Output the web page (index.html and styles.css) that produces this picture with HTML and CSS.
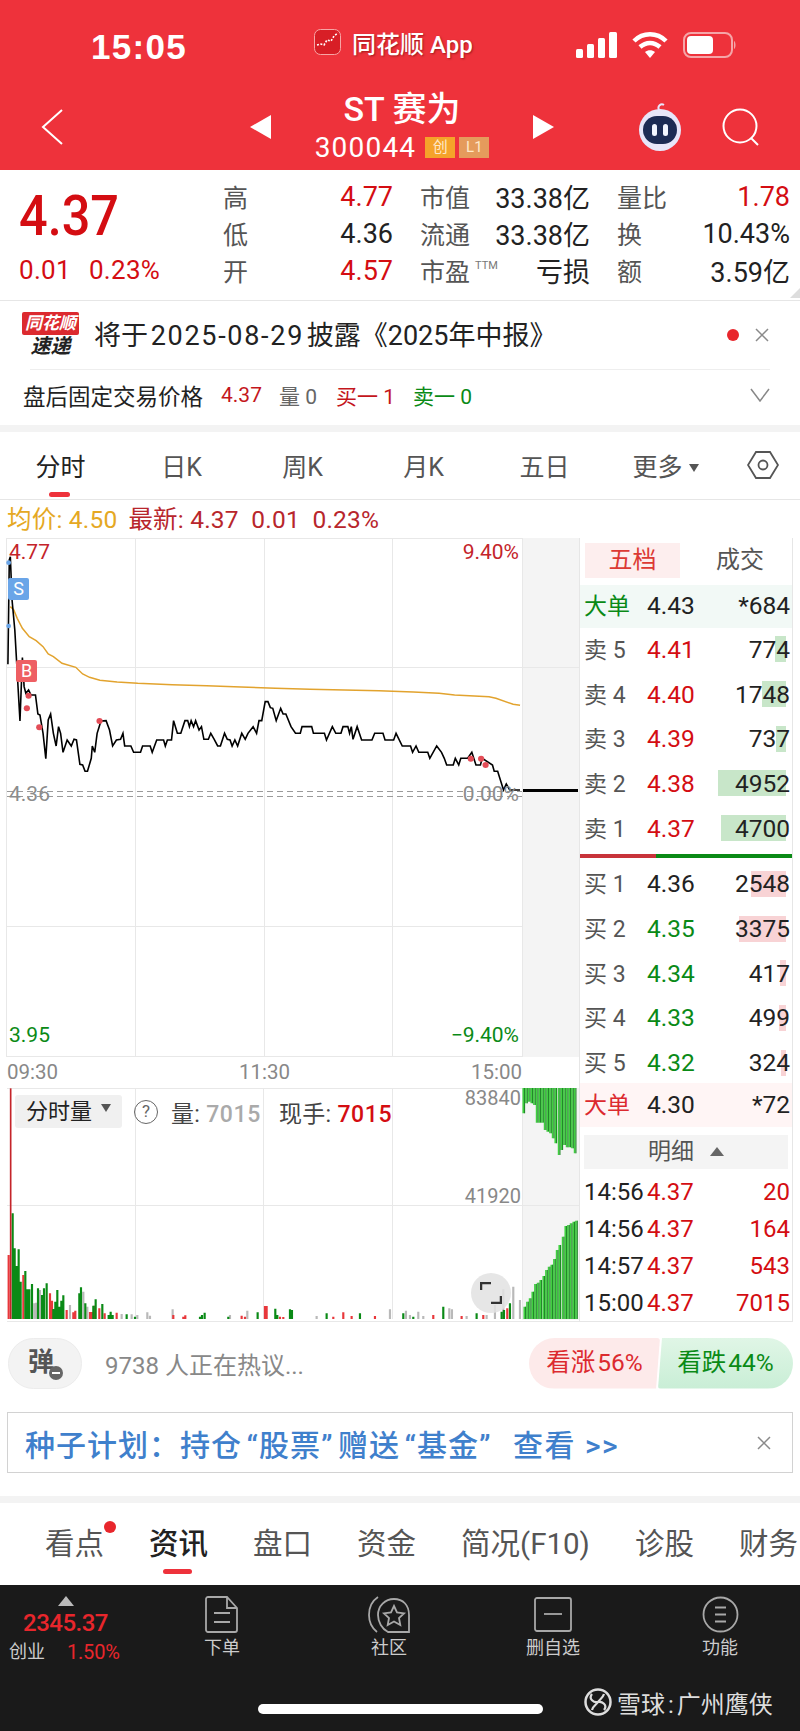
FILE: index.html
```html
<!doctype html>
<html>
  <head>
    <meta charset="utf-8" />
    <title>ST赛为 300044</title>
    <meta name="viewport" content="width=device-width" />
    <link rel="stylesheet" href="styles.css">
  </head>

  <body>
    <header class="topbar">
      <div class="status">
        <span class="time">15:05</span>
        <svg class="app-icon" width="27" height="26" viewBox="0 0 27 26">
          <rect x="0.5" y="0.5" width="26" height="25" rx="6" fill="#d81e26" stroke="#f7a5a5" />
          <path d="M3 16l4-1 3 1 3-5 4 1 3-5 4-3" fill="none" stroke="#fff" stroke-width="1.6" stroke-dasharray="2 1.5" />
        </svg>
        <span class="app-name">同花顺 App</span>
        <svg class="signal" width="41" height="26" viewBox="0 0 41 26">
          <rect x="0" y="17" width="7" height="9" rx="1.5" fill="#fff" />
          <rect x="11" y="12" width="7" height="14" rx="1.5" fill="#fff" />
          <rect x="22" y="6" width="7" height="20" rx="1.5" fill="#fff" />
          <rect x="33" y="0" width="8" height="26" rx="1.5" fill="#fff" />
        </svg>
        <svg class="wifi" width="36" height="26" viewBox="0 0 36 26">
          <path d="M2 9c9-9 23-9 32 0" fill="none" stroke="#fff" stroke-width="4.5" />
          <path d="M8 15c6-5.500 14-5.500 20 0" fill="none" stroke="#fff" stroke-width="4.500" />
          <path d="M13 20c3-2.500 7-2.500 10 0l-5 6z" fill="#fff" />
        </svg>
        <svg class="battery" width="54" height="26" viewBox="0 0 54 26">
          <rect x="1" y="1" width="48" height="24" rx="7" fill="none" stroke="#f5a5a8" stroke-width="2" />
          <rect x="4" y="4" width="26" height="18" rx="4" fill="#fff" />
          <path d="M51 9c2 1 2 7 0 8z" fill="#f5a5a8" />
        </svg>
      </div>
      <div class="nav">
        <svg class="back" width="22" height="36" viewBox="0 0 22 36"><path d="M21 1L2 18l19 17" fill="none" stroke="#fff" stroke-width="2" /></svg>
        <svg class="arrow" width="21" height="24" viewBox="0 0 21 24"><path d="M21 0v24L0 12z" fill="#fff" /></svg>
        <div class="stock">
          <div class="stock-name">ST 赛为</div>
          <div class="stock-code">300044<span class="tag tag-cy">创</span><span class="tag tag-l1">L1</span></div>
        </div>
        <svg class="arrow" width="21" height="24" viewBox="0 0 21 24"><path d="M0 0v24l21-12z" fill="#fff" /></svg>
        <svg class="robot" width="46" height="48" viewBox="0 0 46 48">
          <path d="M22 7c-2-4 2-7 5-5" fill="none" stroke="#e9e6fb" stroke-width="2" />
          <circle cx="23" cy="27" r="21" fill="#e7e6fa" />
          <rect x="6" y="13" width="34" height="28" rx="14" fill="#1c2b55" />
          <rect x="15" y="21" width="5" height="12" rx="2.500" fill="#f2f5ff" />
          <rect x="26" y="21" width="5" height="12" rx="2.500" fill="#f2f5ff" />
        </svg>
        <svg class="search" width="38" height="38" viewBox="0 0 38 38">
          <circle cx="18" cy="18" r="16.500" fill="none" stroke="#fff" stroke-width="2" />
          <path d="M29 30l7 7" stroke="#fff" stroke-width="2" />
        </svg>
      </div>
    </header>

    <section class="quote">
      <div class="last">
        <div class="last-price">4.37</div>
        <div class="last-change"><span>0.01</span><span>0.23%</span></div>
      </div>
      <div class="stats">
        <div class="stat"><span class="k">高</span><span class="v up">4.77</span></div>
        <div class="stat"><span class="k">市值</span><span class="v">33.38亿</span></div>
        <div class="stat"><span class="k">量比</span><span class="v up">1.78</span></div>
        <div class="stat"><span class="k">低</span><span class="v">4.36</span></div>
        <div class="stat"><span class="k">流通</span><span class="v">33.38亿</span></div>
        <div class="stat"><span class="k">换</span><span class="v">10.43%</span></div>
        <div class="stat"><span class="k">开</span><span class="v up">4.57</span></div>
        <div class="stat"><span class="k">市盈<sup class="ttm">TTM</sup></span><span class="v">亏损</span></div>
        <div class="stat"><span class="k">额</span><span class="v">3.59亿</span></div>
      </div>
    </section>

    <section class="notice">
      <div class="notice-top">
        <div class="express">
          <div class="express-flag">同花顺</div>
          <div class="express-word">速递</div>
        </div>
        <div class="notice-text">将于 <span class="notice-date">2025-08-29</span> 披露《2025年中报》</div>
        <span class="notice-dot"></span>
        <svg class="close" width="14" height="14" viewBox="0 0 14 14"><path d="M1 1l12 12M13 1L1 13" stroke="#8a8a8a" stroke-width="1.500" /></svg>
      </div>
      <div class="notice-bottom">
        <span class="nb-title">盘后固定交易价格</span>
        <span class="nb-price">4.37</span>
        <span class="nb-vol">量 0</span>
        <span class="nb-buy">买一 1</span>
        <span class="nb-sell">卖一 0</span>
        <svg class="chevron" width="20" height="14" viewBox="0 0 20 14"><path d="M1 1l9 12 9-12" fill="none" stroke="#888" stroke-width="1.500" /></svg>
      </div>
    </section>

    <nav class="ktabs">
      <span class="ktab active">分时</span>
      <span class="ktab">日K</span>
      <span class="ktab">周K</span>
      <span class="ktab">月K</span>
      <span class="ktab">五日</span>
      <span class="ktab">更多<i class="caret"></i></span>
      <svg class="hex" width="32" height="28" viewBox="0 0 32 28">
        <path d="M9 1h14l8 13-8 13H9L1 14z" fill="none" stroke="#555" stroke-width="1.800" />
        <circle cx="16" cy="14" r="4.500" fill="none" stroke="#555" stroke-width="1.800" />
      </svg>
    </nav>

    <div class="pricebar">
      <span class="avg">均价: 4.50</span>
      <span class="latest">最新: 4.37&nbsp; 0.01&nbsp; 0.23%</span>
    </div>

    <main class="board">
      <div class="charts">
        <div class="price-chart">
          <svg width="579" height="519" viewBox="0 0 579 519">
            <rect x="522" y="0" width="57" height="519" fill="#f4f4f4" />
            <path class="grid" d="M7 .5H522M7 129.500H579M7 388.500H522M7 518.500H522M6.500 0V519M135.500 0V519M264.500 0V519M392.500 0V519M522.500 0V519" />
            <path class="dash" d="M7 253.500H522M7 258.500H522" />
            <path d="M523 252.500H578" stroke="#000" stroke-width="3" />
            <g transform="translate(0 -8) scale(.3444 .3333)">
              <polyline class="avg-line" points="30,230 40,240 50,265 65,295 85,320 105,332 125,350 140,372 155,380 180,400 220,412 240,432 260,442 290,451 340,456 400,460 500,464 600,467 700,471 800,475 900,478 1000,480 1100,482 1200,486 1275,490 1320,495 1420,500 1440,505 1490,523 1510,526" />
              <polyline class="price-line" points="23,403 27,90 30,80 35,210 43,300 58,573 65,383 70,470 75,490 83,480 90,495 103,495 110,552 116,555 125,610 133,686 140,570 147,552 155,610 163,648 170,590 176,610 183,667 195,630 207,648 215,628 222,630 232,703 240,705 247,724 254,724 265,685 268,648 275,667 282,610 288,590 293,573 308,572 318,600 327,648 338,630 350,628 357,610 362,648 380,648 388,667 408,667 414,648 436,648 442,667 455,630 475,630 480,648 486,630 498,630 504,572 515,610 525,610 537,572 545,572 550,590 555,572 562,590 568,572 578,600 585,590 592,628 605,628 612,610 622,628 632,648 640,648 652,610 660,628 668,630 674,648 682,630 690,648 702,610 712,628 720,610 735,590 745,610 752,572 760,572 770,515 778,515 785,533 792,535 802,572 815,535 822,552 830,552 845,590 858,610 872,610 877,590 905,590 910,610 942,610 948,630 965,590 975,610 990,610 996,590 1010,590 1015,610 1020,590 1025,628 1037,590 1050,630 1080,630 1088,610 1112,610 1118,630 1143,630 1150,610 1168,648 1192,648 1198,667 1208,648 1216,667 1242,667 1248,685 1268,648 1282,667 1290,685 1297,705 1316,705 1322,685 1332,705 1338,685 1358,685 1370,667 1382,705 1395,705 1400,685 1430,705 1435,724 1445,724 1462,780 1470,762 1480,780 1510,780" />
              <g class="dots-red">
                <circle cx="83" cy="497" r="9" /><circle cx="78" cy="535" r="9" /><circle cx="114" cy="592" r="9" />
                <circle cx="289" cy="573" r="9" /><circle cx="1367" cy="686" r="9" /><circle cx="1397" cy="686" r="9" /><circle cx="1410" cy="705" r="9" />
              </g>
              <g class="dots-blue"><circle cx="25" cy="98" r="7" /><circle cx="25" cy="288" r="7" /></g>
            </g>
          </svg>
          <span class="flag flag-s">S</span>
          <span class="flag flag-b">B</span>
          <span class="axis axis-high">4.77</span>
          <span class="axis axis-high-pct">9.40%</span>
          <span class="axis axis-mid">4.36</span>
          <span class="axis axis-mid-pct">0.00%</span>
          <span class="axis axis-low">3.95</span>
          <span class="axis axis-low-pct">−9.40%</span>
        </div>

        <div class="timeline"><span>09:30</span><span>11:30</span><span>15:00</span></div>

        <div class="volume-chart">
          <svg width="579" height="234" viewBox="0 0 579 234">
            <rect x="522" y="0" width="57" height="232" fill="#f4f4f4" />
            <path class="grid" d="M7 .5H522M7 117.500H579M7 233.500H579M135.500 0V231M263.500 0V231M392.500 0V231M522.500 0V231" />
            <g transform="translate(0 -28) scale(.3333)">
              <path class="bars-gray" d="M103 777V730M108 777V728M120 777V690M210 777V735M250 777V695M262 777V740M365 777V762M395 777V763M412 777V765M442 777V757M450 777V767M518 777V748M690 777V765M742 777V752M950 777V768M1170 777V748M1218 777V752M1230 777V765M1255 777V755M1270 777V768M1348 777V745M1356 777V748M1400 777V768M1460 777V765M1485 777V735M1510 777V688M1540 777V680M1560 777V720" />
              <path class="bars-red" d="M26 777V585M70 777V645M150 777V700M156 777V722M200 777V750M220 777V757M226 777V752M270 777V756M276 777V756M283 777V737M298 777V745M314 777V760M350 777V758M520 777V765M550 777V770M556 777V766M725 777V767M735 777V770M795 777V738M800 777V738M840 777V770M850 777V771M1000 777V770M1030 777V757M1055 777V768M1125 777V768M1300 777V765M1385 777V768M1450 777V765M1522 777V745" />
              <path class="bars-green" d="M38 777V460M44 777V565M50 777V618M56 777V568M62 777V665M76 777V633M82 777V688M88 777V688M96 777V672M114 777V685M126 777V705M132 777V685M140 777V670M160 777V747M166 777V725M172 777V690M178 777V740M184 777V722M190 777V706M238 777V700M243 777V682M256 777V730M280 777V737M287 777V718M307 777V732M326 777V765M332 777V755M338 777V765M380 777V763M405 777V770M600 777V770M606 777V765M614 777V758M685 777V770M773 777V757M826 777V746M832 777V765M870 777V748M876 777V750M980 777V760M1080 777V760M1210 777V760M1240 777V770M1330 777V740M1430 777V760M1505 777V755M1512 777V750M1530 777V730" />
              <path class="bar-spike" d="M32 777V85" />
              <g class="strip-bars">
                <path id="strip" d="M1570 84V160M1578 84V130M1586 84V125M1594 84V130M1602 84V135M1610 84V188M1618 84V188M1626 84V188M1634 84V210M1642 84V215M1650 84V220M1658 84V235M1666 84V250M1676 84V285M1684 84V270M1692 84V255M1700 84V262M1708 84V262M1716 84V265M1724 84V280M1573 777V740M1581 777V725M1589 777V715M1597 777V695M1605 777V672M1613 777V668M1621 777V660M1630 777V648M1638 777V630M1646 777V620M1654 777V614M1662 777V597M1670 777V570M1678 777V555M1688 777V530M1696 777V498M1704 777V495M1712 777V490M1720 777V485M1728 777V482" />
                <use href="#strip" class="strip-dark" x="4" />
              </g>
            </g>
          </svg>
          <div class="vol-head">
            <span class="vol-select">分时量<i class="caret caret-big"></i></span>
            <span class="help">?</span>
            <span class="vol-text">量: <b class="vol-grey">7015</b></span>
            <span class="vol-text vol-now">现手: <b class="up">7015</b></span>
          </div>
          <span class="axis vol-max">83840</span>
          <span class="axis vol-half">41920</span>
          <span class="expand">
            <svg width="22" height="22" viewBox="0 0 22 22"><path d="M1 8V1h10M21 14v7H11" fill="none" stroke="#333" stroke-width="2.500" /></svg>
          </span>
        </div>
      </div>

      <aside class="book">
        <div class="book-tabs">
          <span class="book-tab active">五档</span>
          <span class="book-tab">成交</span>
        </div>
        <div class="row big big-sell"><span class="lab">大单</span><span class="prc">4.43</span><span class="qty">*684</span></div>
        <div class="row"><span class="lab">卖 5</span><span class="prc up">4.41</span><span class="qty ask" style="background-size:11px 26px">774</span></div>
        <div class="row"><span class="lab">卖 4</span><span class="prc up">4.40</span><span class="qty ask" style="background-size:24px 26px">1748</span></div>
        <div class="row"><span class="lab">卖 3</span><span class="prc up">4.39</span><span class="qty ask" style="background-size:10px 26px">737</span></div>
        <div class="row"><span class="lab">卖 2</span><span class="prc up">4.38</span><span class="qty ask" style="background-size:68px 26px">4952</span></div>
        <div class="row"><span class="lab">卖 1</span><span class="prc up">4.37</span><span class="qty ask" style="background-size:65px 26px">4700</span></div>
        <div class="ratio"><span class="ratio-buy"></span><span class="ratio-sell"></span></div>
        <div class="row"><span class="lab">买 1</span><span class="prc">4.36</span><span class="qty bid" style="background-size:35px 26px">2548</span></div>
        <div class="row"><span class="lab">买 2</span><span class="prc down">4.35</span><span class="qty bid" style="background-size:47px 26px">3375</span></div>
        <div class="row"><span class="lab">买 3</span><span class="prc down">4.34</span><span class="qty bid" style="background-size:6px 26px">417</span></div>
        <div class="row"><span class="lab">买 4</span><span class="prc down">4.33</span><span class="qty bid" style="background-size:7px 26px">499</span></div>
        <div class="row"><span class="lab">买 5</span><span class="prc down">4.32</span><span class="qty bid" style="background-size:5px 26px">324</span></div>
        <div class="row big big-buy"><span class="lab">大单</span><span class="prc">4.30</span><span class="qty">*72</span></div>
        <div class="detail-head">明细<i class="tri-up"></i></div>
        <div class="ticks">
          <div class="row tick"><span class="tm">14:56</span><span class="prc up">4.37</span><span class="qty up">20</span></div>
          <div class="row tick"><span class="tm">14:56</span><span class="prc up">4.37</span><span class="qty up">164</span></div>
          <div class="row tick"><span class="tm">14:57</span><span class="prc up">4.37</span><span class="qty up">543</span></div>
          <div class="row tick"><span class="tm">15:00</span><span class="prc up">4.37</span><span class="qty up">7015</span></div>
        </div>
      </aside>
    </main>

    <section class="talk">
      <span class="danmu">弹<i class="danmu-off"></i></span>
      <span class="talk-text">9738 人正在热议...</span>
      <div class="vote">
        <span class="vote-up">看涨 56%</span>
        <span class="vote-down">看跌 44%</span>
      </div>
    </section>

    <section class="promo">
      <span class="promo-text">种子计划：持仓<i class="q-open">“</i>股票<i class="q-close">”</i>赠送<i class="q-open">“</i>基金<i class="q-close">”</i><span class="promo-link">查看 &gt;&gt;</span></span>
      <svg width="14" height="14" viewBox="0 0 14 14"><path d="M1 1l12 12M13 1L1 13" stroke="#8a8a8a" stroke-width="1.500" /></svg>
    </section>

    <div class="band"></div>

    <nav class="infotabs">
      <span class="info has-dot">看点</span>
      <span class="info active">资讯</span>
      <span class="info">盘口</span>
      <span class="info">资金</span>
      <span class="info">简况(F10)</span>
      <span class="info">诊股</span>
      <span class="info">财务</span>
    </nav>

    <footer class="dock">
      <div class="dock-nav">
        <div class="index">
          <i class="tri-index"></i>
          <div class="index-value">2345.37</div>
          <div class="index-line"><span>创业</span><b>1.50%</b></div>
        </div>
        <div class="dock-item">
          <svg width="34" height="37" viewBox="0 0 34 37">
            <path d="M3 1h19l10 11v22a2 2 0 0 1-2 2H3a2 2 0 0 1-2-2V3a2 2 0 0 1 2-2zM22 1v11h10M9 17h16M9 26h16" fill="none" stroke="#a8a8a8" stroke-width="1.800" />
          </svg>
          <span>下单</span>
        </div>
        <div class="dock-item">
          <svg width="42" height="37" viewBox="0 0 42 37">
            <path d="M26 3c-9 0-16 7-16 16 0 7 4 14 10 17h21V19C41 9 35 3 26 3z" fill="none" stroke="#a8a8a8" stroke-width="1.800" />
            <path d="M10 1C4 5 1 12 1 19s3 13 8 17" fill="none" stroke="#a8a8a8" stroke-width="1.800" />
            <path d="M26 10l3 6.500 7 .8-5 4.700 1.300 7-6.300-3.500-6.300 3.500 1.300-7-5-4.700 7-.8z" fill="none" stroke="#a8a8a8" stroke-width="1.800" />
          </svg>
          <span>社区</span>
        </div>
        <div class="dock-item">
          <svg width="38" height="37" viewBox="0 0 38 37">
            <rect x="1" y="2" width="36" height="33" rx="2" fill="none" stroke="#a8a8a8" stroke-width="1.800" />
            <path d="M10 18h18" stroke="#a8a8a8" stroke-width="1.800" />
          </svg>
          <span>删自选</span>
        </div>
        <div class="dock-item dock-last">
          <svg width="37" height="37" viewBox="0 0 37 37">
            <circle cx="18.500" cy="18.500" r="17" fill="none" stroke="#a8a8a8" stroke-width="1.800" />
            <path d="M13 11.500h11M13 18.500h11M13 25.500h11" stroke="#a8a8a8" stroke-width="1.800" />
          </svg>
          <span>功能</span>
        </div>
      </div>
      <div class="dock-bottom">
        <span class="home"></span>
        <span class="mark">
          <svg width="28" height="28" viewBox="0 0 28 28">
            <circle cx="14" cy="14" r="12.500" fill="none" stroke="#ddd" stroke-width="2.500" />
            <path d="M8 6c-4 5 2 9 6 8s10 3 6 8M20 6c-1 4-5 6-6 8s-5 4-6 8" fill="none" stroke="#ddd" stroke-width="2.200" />
          </svg>
          雪球 : 广州鹰侠
        </span>
      </div>
    </footer>
  </body>
</html>
```

FILE: styles.css
```css
* {
  box-sizing: border-box;
}
body {
  margin: 0;
  width: 800px;
  height: 1731px;
  overflow: hidden;
  background: #fff;
  color: #222;
  font-family: Roboto, "Noto Sans CJK SC", sans-serif;
}
.up {
  color: #d40d12;
}
.down {
  color: #0a8a16;
}

/* top red bar */
.topbar {
  height: 170px;
  background: #ee323b;
  color: #fff;
}
.status {
  display: flex;
  align-items: center;
  height: 90px;
  padding-left: 91px;
}
.time {
  width: 223px;
  margin-top: 4px;
  font: bold 35px "Liberation Sans", sans-serif;
  letter-spacing: 1.300px;
}
.app-icon {
  margin-top: -6px;
}
.app-name {
  width: 224px;
  margin: -6px 0 0 11px;
  font-size: 24px;
  font-weight: 500;
  text-shadow: 1px 1px 2px rgba(90, 0, 0, 0.5);
}
.wifi {
  margin-left: 15px;
}
.battery {
  margin-left: 15px;
}
.nav {
  display: flex;
  align-items: center;
  height: 80px;
  padding-left: 41px;
}
.back {
  margin-right: 187px;
  margin-top: -6px;
}
.arrow {
  margin-top: -6px;
}
.stock {
  width: 262px;
  text-align: center;
}
.stock-name {
  font-size: 34px;
  font-weight: 500;
  line-height: 38px;
  margin-top: -8px;
}
.stock-code {
  display: flex;
  justify-content: center;
  align-items: center;
  margin-top: 5px;
  font-size: 28px;
  line-height: 30px;
  letter-spacing: 1.200px;
}
.tag {
  width: 30px;
  height: 21px;
  margin-left: 4px;
  font-size: 15px;
  line-height: 21px;
  letter-spacing: 0;
  color: #ffe9c9;
}
.stock-code .tag-cy {
  margin-left: 9px;
  background: #f5a32a;
}
.tag-l1 {
  background: #e59b5c;
}
.robot {
  margin: -6px 0 0 83px;
}
.search {
  margin: -6px 0 0 39px;
}

/* quote block */
.quote {
  position: relative;
  display: flex;
  height: 131px;
  border-bottom: 1px solid #e6e6e6;
}
.quote::after {
  content: "";
  position: absolute;
  right: 0;
  bottom: 2px;
  width: 10px;
  height: 10px;
  background: #ddd;
  clip-path: polygon(100% 0, 100% 100%, 0 100%);
}
.last {
  width: 223px;
  padding: 20px 0 0 19px;
  color: #d40d12;
}
.last-price {
  font-size: 56px;
  font-weight: 500;
  line-height: 52px;
  transform: scaleX(0.9);
  transform-origin: left center;
}
.last-change {
  display: flex;
  gap: 18px;
  margin-top: 13px;
  font-size: 26px;
  line-height: 30px;
  letter-spacing: 0.300px;
}
.stats {
  display: grid;
  grid-template-columns: 170px 170px 173px;
  grid-auto-rows: 37px;
  column-gap: 27px;
  padding-top: 8px;
}
.stat {
  display: flex;
  justify-content: space-between;
  align-items: center;
  white-space: nowrap;
}
.k {
  margin-bottom: 2px;
  color: #555;
  font-size: 25px;
}
.v {
  font-size: 27px;
}
.ttm {
  font-size: 11px;
  margin-left: 5px;
  color: #777;
  vertical-align: 12px;
  line-height: 0;
}

/* notice */
.notice {
  height: 124px;
}
.notice-top {
  display: flex;
  align-items: center;
  height: 68px;
  margin: 0 30px 0 22px;
  padding-right: 1px;
}
.express {
  width: 57px;
  margin-right: 15px;
  text-align: center;
  font-style: italic;
  font-weight: 700;
}
.express-flag {
  height: 23px;
  background: #dc2a2f;
  color: #fff;
  font-size: 17px;
  line-height: 23px;
  border-radius: 2px;
}
.express-word {
  font-size: 20px;
  line-height: 23px;
}
.notice-text {
  flex: 1;
  margin-top: -4px;
  font-size: 27px;
  word-spacing: -4px;
  white-space: nowrap;
}
.notice-date {
  letter-spacing: 1.700px;
}
.notice-dot {
  width: 12px;
  height: 12px;
  margin-right: 16px;
  border-radius: 50%;
  background: #e8262c;
}
.notice-bottom {
  display: flex;
  align-items: center;
  height: 56px;
  margin: 0 30px;
  padding: 0 0 5px;
  border-top: 1px solid #eee;
  font-size: 21px;
  white-space: nowrap;
}
.nb-title {
  margin-left: -7px;
  font-size: 22.500px;
}
.nb-price {
  margin-left: 18px;
  color: #c4161c;
}
.nb-vol {
  margin-left: 17px;
  color: #666;
}
.nb-buy {
  margin-left: 19px;
  color: #c4161c;
}
.nb-sell {
  margin-left: 18px;
  color: #0a8a16;
}
.chevron {
  margin-left: auto;
}

/* period tabs */
.ktabs {
  display: grid;
  grid-template-columns: repeat(6, 121px) 1fr;
  align-items: center;
  justify-items: center;
  height: 75px;
  padding-bottom: 2px;
  border-top: 7px solid #f3f3f3;
  border-bottom: 1px solid #e6e6e6;
  font-size: 25px;
  color: #555;
}
.ktab {
  position: relative;
  white-space: nowrap;
}
.ktab.active {
  color: #222;
}
.ktab.active::after {
  content: "";
  position: absolute;
  left: 14px;
  bottom: -14px;
  width: 21px;
  height: 5px;
  border-radius: 3px;
  background: #ee323b;
}
.caret {
  display: inline-block;
  margin: 0 0 4px 6px;
  border-style: solid;
  border-width: 8px 5.500px 0;
  border-color: #555 transparent transparent;
}
.pricebar {
  display: flex;
  align-items: center;
  gap: 11px;
  height: 38px;
  padding: 0 0 4px 7px;
  font-size: 24.500px;
  letter-spacing: 0.200px;
  white-space: nowrap;
}
.avg {
  color: #e5a823;
}
.latest {
  color: #b8262c;
}

/* charts */
.board {
  display: flex;
  height: 784px;
}
.charts {
  width: 579px;
}
.charts svg {
  display: block;
}
.price-chart,
.volume-chart {
  position: relative;
}
.price-chart {
  height: 518px;
}
.grid {
  fill: none;
  stroke: #e8e8e8;
}
.dash {
  fill: none;
  stroke: #9a9a9a;
  stroke-dasharray: 6 4;
}
.avg-line,
.price-line {
  fill: none;
  vector-effect: non-scaling-stroke;
}
.avg-line {
  stroke: #e2a32e;
  stroke-width: 1.500px;
}
.price-line {
  stroke: #000;
  stroke-width: 1.600px;
}
.dots-red {
  fill: #e34d57;
}
.dots-blue {
  fill: #6aa5e8;
}
.flag {
  position: absolute;
  width: 21px;
  height: 22px;
  border-radius: 2px;
  color: #fff;
  text-align: center;
  font-size: 18px;
  line-height: 22px;
}
.flag-s {
  left: 8px;
  top: 40px;
  background: #6aa5e8;
}
.flag-b {
  left: 16px;
  top: 122px;
  background: #ee5f63;
}
.axis {
  position: absolute;
  font-size: 21px;
  line-height: 24px;
}
.axis-high,
.axis-high-pct {
  top: 2px;
  color: #c4242a;
}
.axis-mid,
.axis-mid-pct {
  top: 244px;
  color: #8c8c8c;
}
.axis-low,
.axis-low-pct {
  top: 485px;
  color: #0a8a16;
}
.axis-high,
.axis-mid,
.axis-low {
  left: 9px;
}
.axis-high-pct,
.axis-mid-pct,
.axis-low-pct {
  right: 60px;
}
.timeline {
  display: flex;
  justify-content: space-between;
  align-items: center;
  height: 32px;
  padding: 0 57px 0 7px;
  font-size: 20.500px;
  color: #888;
}
.volume-chart {
  height: 234px;
}
.bars-gray,
.bars-red,
.bars-green {
  fill: none;
  stroke-width: 6.500px;
}
.bars-gray {
  stroke: #b9b9b9;
}
.bars-red {
  stroke: #e8373b;
}
.bars-green {
  stroke: #0a8a16;
}
.bar-spike {
  fill: none;
  stroke: #c4242a;
  stroke-width: 5px;
}
.strip-bars {
  fill: none;
  stroke: #3fd03f;
  stroke-width: 5px;
}
.strip-dark {
  stroke: #0a7a12;
  stroke-width: 3px;
}
.vol-head {
  position: absolute;
  left: 15px;
  top: 7px;
  display: flex;
  align-items: center;
  height: 33px;
  font-size: 22px;
  white-space: nowrap;
}
.vol-select {
  width: 107px;
  height: 33px;
  padding-left: 11px;
  border-radius: 3px;
  background: #f0f0f0;
  line-height: 33px;
}
.caret-big {
  margin-left: 9px;
  vertical-align: 3px;
}
.help {
  width: 24px;
  height: 24px;
  margin-left: 12px;
  border: 1.500px solid #666;
  border-radius: 50%;
  color: #666;
  text-align: center;
  font-size: 17px;
  line-height: 21px;
}
.vol-text {
  margin-left: 13px;
  color: #444;
  font-size: 23px;
  letter-spacing: 0.300px;
}
.vol-text b {
  font-weight: 500;
  letter-spacing: 0.600px;
}
.vol-grey {
  color: #aaa;
}
.vol-now {
  margin-left: 18px;
}
.vol-max,
.vol-half {
  right: 58px;
  font-size: 20px;
  color: #888;
}
.vol-max {
  top: -2px;
}
.vol-half {
  top: 96px;
}
.expand {
  position: absolute;
  left: 471px;
  top: 185px;
  display: flex;
  align-items: center;
  justify-content: center;
  width: 40px;
  height: 40px;
  border-radius: 50%;
  background: rgba(226, 226, 226, 0.85);
}

/* order book */
.book {
  width: 214px;
  height: 784px;
  padding-top: 5px;
  border-left: 1px solid #e6e6e6;
  border-right: 1px solid #e6e6e6;
  border-bottom: 1px solid #e6e6e6;
}
.book-tabs {
  display: flex;
  height: 35px;
  margin: 0 0 7px 5px;
  font-size: 24px;
  line-height: 35px;
  text-align: center;
  color: #555;
}
.book-tab {
  width: 95px;
}
.book-tab + .book-tab {
  width: 112px;
  padding-left: 8px;
}
.book-tab.active {
  background: #fdeeee;
  color: #dc3a34;
}
.row {
  display: grid;
  grid-template-columns: 63px 60px 1fr;
  align-items: center;
  height: 44.700px;
  padding: 0 2px 2px 4px;
  font-size: 24.500px;
  white-space: nowrap;
}
.lab {
  margin-bottom: 3px;
  font-size: 23px;
  color: #555;
}
.qty {
  text-align: right;
  background-repeat: no-repeat;
  background-position: right 4px center;
}
.ask {
  background-image: linear-gradient(#c8e6c9, #c8e6c9);
}
.bid {
  background-image: linear-gradient(#f8d3d5, #f8d3d5);
}
.big {
  height: 43px;
}
.big-sell {
  background: #f2f9f6;
}
.big-sell .lab {
  color: #0a8a16;
}
.big-buy {
  height: 44px;
  margin-top: -2.500px;
  background: #fff5f5;
}
.big-buy .lab {
  color: #dc2a2f;
}
.ratio {
  display: flex;
  height: 4px;
  margin: 2.500px 0 4.600px;
}
.ratio-buy {
  width: 76px;
  background: #c8333a;
}
.ratio-sell {
  flex: 1;
  background: #0a8a16;
}
.detail-head {
  height: 34px;
  margin: 8px 4px 4.500px 4px;
  background: #f4f4f4;
  color: #555;
  font-size: 23px;
  line-height: 34px;
  text-align: center;
}
.tri-up {
  display: inline-block;
  margin: 0 0 3px 16px;
  border-style: solid;
  border-width: 0 7px 9px;
  border-color: transparent transparent #666;
}
.tick {
  height: 37px;
  padding-bottom: 0;
  grid-template-columns: 63px 60px 1fr;
  font-size: 24px;
}

/* discussion row */
.talk {
  display: flex;
  align-items: center;
  height: 90px;
  padding: 0 7px 8px 8px;
}
.danmu {
  position: relative;
  width: 74px;
  height: 51px;
  padding-right: 8px;
  border: 1px solid #ececec;
  border-radius: 26px;
  background: #f3f3f3;
  color: #555;
  text-align: center;
  font-size: 26px;
  font-weight: 700;
  line-height: 47px;
}
.danmu-off {
  position: absolute;
  left: 40px;
  top: 27px;
  width: 14px;
  height: 14px;
  border-radius: 50%;
  background: #666;
}
.danmu-off::after {
  content: "";
  position: absolute;
  left: 3px;
  top: 6px;
  width: 8px;
  height: 2px;
  background: #fff;
}
.talk-text {
  margin-left: 23px;
  color: #888;
  font-size: 24px;
}
.vote {
  display: flex;
  margin-left: auto;
  font-size: 24.500px;
  line-height: 49px;
  text-align: center;
  white-space: nowrap;
  word-spacing: -4px;
}
.vote-up {
  width: 131px;
  height: 51px;
  border-radius: 26px 3px 3px 26px;
  background: #fdeaea;
  color: #dc2a2f;
  clip-path: polygon(0 0, 100% 0, 97% 100%, 0 100%);
}
.vote-down {
  width: 135px;
  height: 51px;
  margin-left: -2px;
  border-radius: 3px 26px 26px 3px;
  background: linear-gradient(#e0f6e6, #c9eed6);
  color: #0a8a16;
  clip-path: polygon(3% 0, 100% 0, 100% 100%, 0 100%);
}

/* promo banner */
.promo {
  display: flex;
  align-items: center;
  justify-content: space-between;
  height: 61px;
  margin: 0 7px;
  padding: 0 21px 0 17px;
  border: 1px solid #d2d2d2;
}
.promo-text {
  color: #3f80cc;
  font-size: 30px;
  font-weight: 500;
  letter-spacing: 1px;
  white-space: nowrap;
}
.q-open,
.q-close {
  display: inline-block;
  width: 17px;
  font-style: normal;
}
.q-open {
  text-align: right;
}
.promo-link {
  margin-left: 17px;
  letter-spacing: 1.500px;
}
.band {
  height: 7px;
  margin-top: 23px;
  background: #f3f3f3;
}

/* info tabs */
.infotabs {
  display: flex;
  align-items: center;
  height: 82px;
  padding: 0 0 6px 45px;
  font-size: 29.500px;
  color: #555;
  white-space: nowrap;
}
.info {
  position: relative;
  margin-right: 45px;
  flex: none;
}
.info.active {
  color: #222;
  font-weight: 500;
}
.info.active::after {
  content: "";
  position: absolute;
  left: 14px;
  bottom: -12px;
  width: 29px;
  height: 5px;
  border-radius: 3px;
  background: #ee323b;
}
.has-dot::after {
  content: "";
  position: absolute;
  right: -12px;
  top: 1px;
  width: 12px;
  height: 12px;
  border-radius: 50%;
  background: #e8262c;
}

/* bottom dock */
.dock {
  height: 146px;
  background: #1a1a1a;
  color: #ccc;
}
.dock-nav {
  display: grid;
  grid-template-columns: 142px 160px 174px 154px 170px;
  height: 104px;
  padding-top: 11px;
}
.index {
  padding-left: 9px;
  white-space: nowrap;
}
.tri-index {
  display: block;
  width: 0;
  margin: 0 0 0 49px;
  border-style: solid;
  border-width: 0 8px 10px;
  border-color: transparent transparent #bbb;
}
.index-value {
  margin: 3px 0 0 14px;
  color: #e8262c;
  font-size: 24px;
  font-weight: 500;
  line-height: 28px;
  letter-spacing: -0.500px;
}
.index-line {
  display: flex;
  align-items: center;
  margin-top: 2px;
  font-size: 18px;
  line-height: 26px;
}
.index-line b {
  margin-left: 22px;
  color: #e8262c;
  font-size: 20px;
  font-weight: 400;
  letter-spacing: -0.200px;
}
.dock-item {
  display: flex;
  flex-direction: column;
  align-items: center;
  gap: 4px;
  font-size: 18px;
  line-height: 22px;
}
.dock-last {
  padding-left: 10px;
}
.dock-bottom {
  display: flex;
  align-items: center;
  height: 32px;
}
.home {
  width: 285px;
  height: 10px;
  margin: 7px 0 0 258px;
  border-radius: 5px;
  background: #fff;
}
.mark {
  display: flex;
  align-items: center;
  gap: 5px;
  margin: -6px 0 0 41px;
  color: #ddd;
  font-size: 24px;
  white-space: nowrap;
  word-spacing: -3px;
}
```
